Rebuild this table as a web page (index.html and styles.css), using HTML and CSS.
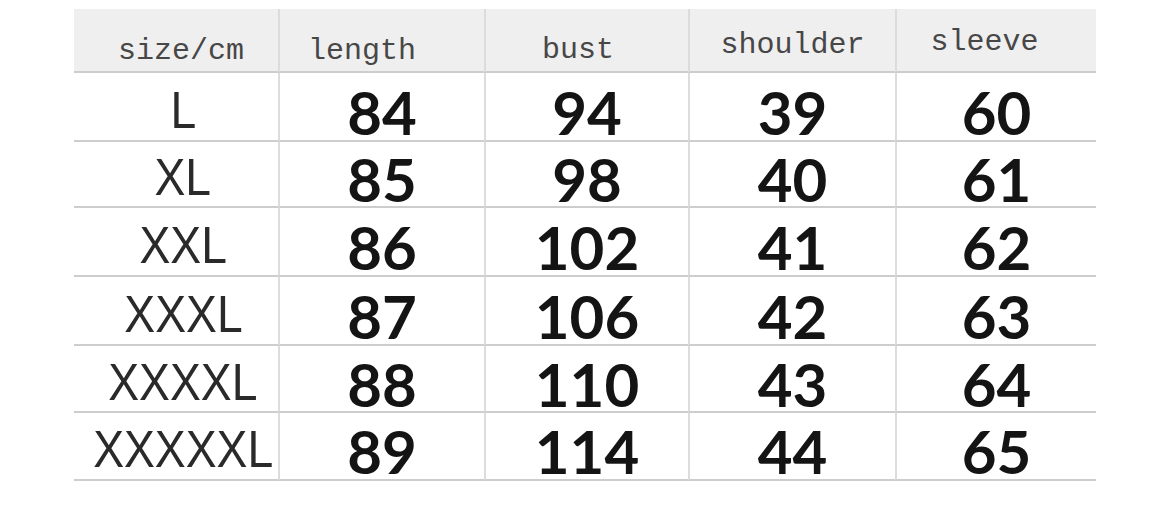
FILE: index.html
```html
<!DOCTYPE html>
<html>
<head>
<meta charset="utf-8">
<link rel="stylesheet" href="styles.css">
</head>
<body>
<div class="chart">
  <div class="cell head h-size"><span>size/cm</span></div>
  <div class="cell head h-length"><span>length</span></div>
  <div class="cell head h-bust"><span>bust</span></div>
  <div class="cell head h-shoulder"><span>shoulder</span></div>
  <div class="cell head h-sleeve"><span>sleeve</span></div>

  <div class="cell size"><span>L</span></div>
  <div class="cell num">84</div>
  <div class="cell num">94</div>
  <div class="cell num">39</div>
  <div class="cell num">60</div>

  <div class="cell size"><span>XL</span></div>
  <div class="cell num">85</div>
  <div class="cell num">98</div>
  <div class="cell num">40</div>
  <div class="cell num">61</div>

  <div class="cell size"><span>XXL</span></div>
  <div class="cell num">86</div>
  <div class="cell num">102</div>
  <div class="cell num">41</div>
  <div class="cell num">62</div>

  <div class="cell size"><span>XXXL</span></div>
  <div class="cell num">87</div>
  <div class="cell num">106</div>
  <div class="cell num">42</div>
  <div class="cell num">63</div>

  <div class="cell size"><span>XXXXL</span></div>
  <div class="cell num">88</div>
  <div class="cell num">110</div>
  <div class="cell num">43</div>
  <div class="cell num">64</div>

  <div class="cell size"><span>XXXXXL</span></div>
  <div class="cell num">89</div>
  <div class="cell num">114</div>
  <div class="cell num">44</div>
  <div class="cell num">65</div>
</div>
</body>
</html>
```

FILE: styles.css
```css
html, body {
  margin: 0;
  padding: 0;
  background: #ffffff;
}

.chart {
  margin: 9px 0 0 74px;
  width: 1022px;
  display: grid;
  grid-template-columns: 204px 206px 204px 207px 201px;
  grid-template-rows: 64px 69px 66px 69px 69px 67px 68px;
}

.cell {
  box-sizing: border-box;
  border-bottom: 2px solid #cdcdcd;
  display: flex;
  justify-content: center;
  align-items: center;
  line-height: 1;
}

.cell:not(:nth-child(5n+1)) {
  border-left: 2px solid #dcdcdc;
}

.head {
  background: #efefef;
  align-items: flex-start;
  font-family: "Liberation Mono", "DejaVu Sans Mono", monospace;
  font-size: 30px;
  color: #474747;
}

.h-size { padding: 27px 0 0 10px; }
.h-length { padding: 27px 40px 0 0; }
.h-bust { padding: 26px 18px 0 0; }
.h-shoulder { padding: 21px 0 0 0; }
.h-sleeve { padding: 18px 24px 0 0; }

.size {
  font-family: "Liberation Sans", Arial, sans-serif;
  font-size: 52px;
  color: #2a2a2a;
  padding: 6px 0 0 14px;
}

.size span {
  display: inline-block;
  transform: scaleX(0.89);
  white-space: nowrap;
}

.num {
  font-family: "Lato", "Open Sans", sans-serif;
  font-weight: 700;
  font-size: 60px;
  color: #141414;
  padding-top: 10px;
}
```
